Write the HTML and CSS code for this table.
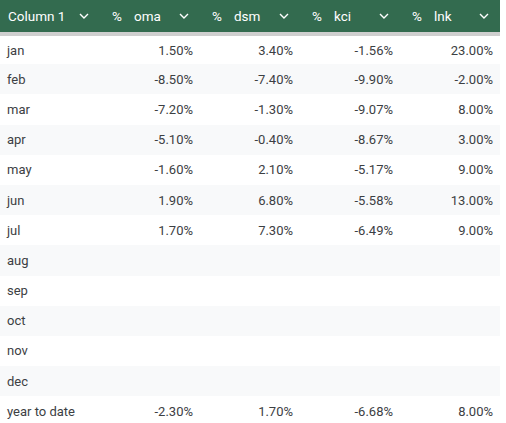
FILE: index.html
```html
<!DOCTYPE html>
<html>
<head>
<meta charset="utf-8">
<link rel="stylesheet" href="styles.css">
</head>
<body>
<table class="grid">
  <thead>
    <tr>
      <th><div class="hd"><span class="lbl">Column 1</span><span class="chev"><svg width="10" height="6" viewBox="0 0 10 6"><path d="M1 1l4 4 4-4" fill="none" stroke="#fff" stroke-width="1.4"/></svg></span></div></th>
      <th><div class="hd"><span class="pct">%</span><span class="lbl">oma</span><span class="chev"><svg width="10" height="6" viewBox="0 0 10 6"><path d="M1 1l4 4 4-4" fill="none" stroke="#fff" stroke-width="1.4"/></svg></span></div></th>
      <th><div class="hd"><span class="pct">%</span><span class="lbl">dsm</span><span class="chev"><svg width="10" height="6" viewBox="0 0 10 6"><path d="M1 1l4 4 4-4" fill="none" stroke="#fff" stroke-width="1.4"/></svg></span></div></th>
      <th><div class="hd"><span class="pct">%</span><span class="lbl">kci</span><span class="chev"><svg width="10" height="6" viewBox="0 0 10 6"><path d="M1 1l4 4 4-4" fill="none" stroke="#fff" stroke-width="1.4"/></svg></span></div></th>
      <th><div class="hd"><span class="pct">%</span><span class="lbl">lnk</span><span class="chev"><svg width="10" height="6" viewBox="0 0 10 6"><path d="M1 1l4 4 4-4" fill="none" stroke="#fff" stroke-width="1.4"/></svg></span></div></th>
    </tr>
  </thead>
  <tbody>
    <tr><td>jan</td><td>1.50%</td><td>3.40%</td><td>-1.56%</td><td>23.00%</td></tr>
    <tr><td>feb</td><td>-8.50%</td><td>-7.40%</td><td>-9.90%</td><td>-2.00%</td></tr>
    <tr><td>mar</td><td>-7.20%</td><td>-1.30%</td><td>-9.07%</td><td>8.00%</td></tr>
    <tr><td>apr</td><td>-5.10%</td><td>-0.40%</td><td>-8.67%</td><td>3.00%</td></tr>
    <tr><td>may</td><td>-1.60%</td><td>2.10%</td><td>-5.17%</td><td>9.00%</td></tr>
    <tr><td>jun</td><td>1.90%</td><td>6.80%</td><td>-5.58%</td><td>13.00%</td></tr>
    <tr><td>jul</td><td>1.70%</td><td>7.30%</td><td>-6.49%</td><td>9.00%</td></tr>
    <tr><td>aug</td><td></td><td></td><td></td><td></td></tr>
    <tr><td>sep</td><td></td><td></td><td></td><td></td></tr>
    <tr><td>oct</td><td></td><td></td><td></td><td></td></tr>
    <tr><td>nov</td><td></td><td></td><td></td><td></td></tr>
    <tr><td>dec</td><td></td><td></td><td></td><td></td></tr>
    <tr><td>year to date</td><td>-2.30%</td><td>1.70%</td><td>-6.68%</td><td>8.00%</td></tr>
  </tbody>
</table>
</body>
</html>
```
FILE: styles.css
```css
html, body {
  margin: 0;
  padding: 0;
  background: #fff;
}
.grid {
  border-collapse: collapse;
  table-layout: fixed;
  width: 500px;
  font-family: Roboto, "Liberation Sans", sans-serif;
  font-size: 13px;
  color: #3c4043;
}
.grid th {
  width: 100px;
  height: 34px;
  padding: 0 8px 0 8px;
  background: #336b4f;
  border-bottom: 4px solid #cfcfcf;
  color: #fff;
  font-weight: 400;
  font-size: 13.5px;
  text-align: left;
  box-sizing: border-box;
}
.hd {
  display: flex;
  align-items: center;
}
.pct {
  width: 18px;
  text-align: center;
  margin-right: 8px;
}
.lbl {
  flex: 1;
  white-space: nowrap;
}
.chev {
  width: 16px;
  display: flex;
  justify-content: center;
  align-items: center;
}
.grid td {
  height: 30.2px;
  padding: 0 7px;
  text-align: right;
  box-sizing: border-box;
  white-space: nowrap;
}
.grid td:first-child {
  text-align: left;
}
.grid tbody tr:nth-child(even) td {
  background: #f8f9fa;
}
```
